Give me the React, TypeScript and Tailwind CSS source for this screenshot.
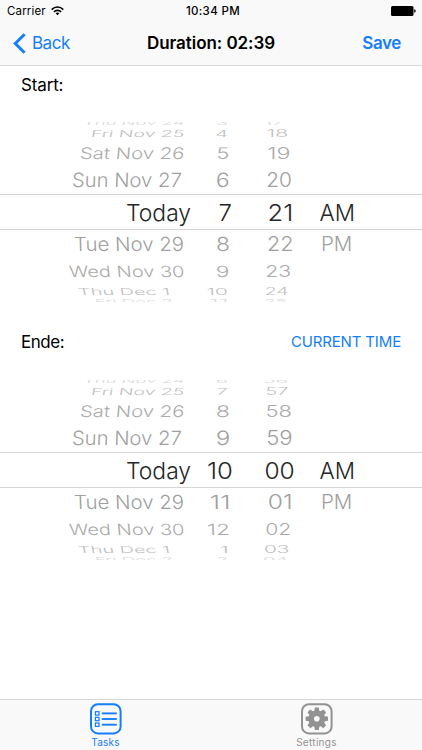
import React from 'react';

type Item = {
  text: string;
  // left and right edge of the drawn text
  left: number;
  right: number;
};

type WheelRow = {
  date: Item;
  hour: Item;
  minute: Item;
  period?: Item;
};

const item = (text: string, left: number, right: number): Item => ({ text, left, right });

const FONT = 'Inter, "Liberation Sans", sans-serif';

// Height, color and flattening of each row, from the top of the wheel to the bottom
const rowStyles = [
  { className: 'h-[4px] text-[#dadada]', size: 20, scaleY: 0.34, skew: -6, shift: -1.8 },
  { className: 'h-[14px] text-[#c0c0c0]', size: 20, scaleY: 0.48, skew: -5, shift: 0.3 },
  { className: 'h-[26px] text-[#ababab]', size: 20, scaleY: 0.8, skew: -4, shift: 0.3 },
  { className: 'h-[28px] text-[#a0a0a0]', size: 20, scaleY: 0.98, skew: -2, shift: 0.6 },
  { className: 'h-[36px] border-y border-[#d6d6d6] text-[#262626]', size: 23, scaleY: 1.02, skew: 0, shift: 0.5 },
  { className: 'h-[28px] text-[#a0a0a0]', size: 20, scaleY: 0.97, skew: 2, shift: 0.3 },
  { className: 'h-[26px] text-[#ababab]', size: 20, scaleY: 0.77, skew: 4, shift: 0.6 },
  { className: 'h-[14px] text-[#c0c0c0]', size: 20, scaleY: 0.48, skew: 5, shift: 0.4 },
  { className: 'h-[4px] text-[#dadada]', size: 20, scaleY: 0.34, skew: 6, shift: 2 },
];

const dates = [
  item('Thu Nov 24', 84, 184),
  item('Fri Nov 25', 92, 183.5),
  item('Sat Nov 26', 81, 183.5),
  item('Sun Nov 27', 73, 181.5),
  item('Today', 127, 190.3),
  item('Tue Nov 29', 75, 183),
  item('Wed Nov 30', 69, 184),
  item('Thu Dec 1', 79, 168),
  item('Fri Dec 2', 96, 172),
];

const startHours = [
  item('3', 217, 227),
  item('4', 216.5, 227.5),
  item('5', 217.5, 228.5),
  item('6', 217, 228.5),
  item('7', 219.5, 231),
  item('8', 217, 228.5),
  item('9', 217, 228.3),
  item('10', 207.5, 227.5),
  item('11', 210, 226.5),
];

const startMinutes = [
  item('17', 265, 283),
  item('18', 267.5, 287),
  item('19', 268.5, 289.3),
  item('20', 267.3, 291.5),
  item('21', 268.7, 291),
  item('22', 268, 292),
  item('23', 266.3, 290),
  item('24', 265.7, 288),
  item('25', 265, 286),
];

const endHours = [
  item('6', 217, 227),
  item('7', 217.5, 227),
  item('8', 217, 228.5),
  item('9', 217, 229),
  item('10', 208, 231.5),
  item('11', 211, 228),
  item('12', 208.3, 228.3),
  item('1', 221, 226.7),
  item('2', 218, 227),
];

const endMinutes = [
  item('56', 264, 287),
  item('57', 266.5, 288),
  item('58', 266.5, 290.5),
  item('59', 267.3, 291.5),
  item('00', 265.5, 293.5),
  item('01', 269, 290.3),
  item('02', 266.3, 290),
  item('03', 265, 288.3),
  item('04', 264, 287),
];

const buildRows = (hours: Item[], minutes: Item[]): WheelRow[] =>
  dates.map((date, index) => ({
    date,
    hour: hours[index],
    minute: minutes[index],
    period: index === 4 ? item('AM', 319.5, 353.3) : index === 5 ? item('PM', 322, 351.3) : undefined,
  }));

const context = document.createElement('canvas').getContext('2d')!;

interface CellProps {
  value?: Item;
  start: number;
  lean?: number;
  row: (typeof rowStyles)[number];
}

const Cell: React.FC<CellProps> = ({ value, start, lean = 0, row }) => {
  if (!value) {
    return <div />;
  }
  context.font = `350 ${row.size}px ${FONT}`;
  const box = context.measureText(value.text);
  const scaleX = (value.right - value.left) / (box.actualBoundingBoxRight + box.actualBoundingBoxLeft);
  const x = value.left - start + box.actualBoundingBoxLeft * scaleX;

  return (
    <div className="flex h-full items-center">
      <span
        className="origin-left whitespace-nowrap leading-none"
        style={{
          fontSize: row.size,
          transform: `translate(${x}px, ${row.shift}px) scale(${scaleX}, ${row.scaleY}) skewX(${row.skew * lean}deg)`,
        }}
      >
        {value.text}
      </span>
    </div>
  );
};

const Wheel: React.FC<{ rows: WheelRow[] }> = ({ rows }) => (
  <div className="flex flex-col overflow-hidden font-[350]">
    {rows.map((row, index) => (
      <div
        key={index}
        className={`grid shrink-0 grid-cols-[200px_56px_56px_110px] grid-rows-[100%] ${rowStyles[index].className}`}
      >
        <Cell value={row.date} start={0} lean={1} row={rowStyles[index]} />
        <Cell value={row.hour} start={200} lean={0.3} row={rowStyles[index]} />
        <Cell value={row.minute} start={256} row={rowStyles[index]} />
        <Cell value={row.period} start={312} row={rowStyles[index]} />
      </div>
    ))}
  </div>
);

const StatusBar = () => (
  <div className="grid h-[21px] grid-cols-3 items-center pl-[7px] pr-[6px] pt-px text-[11.5px] leading-none">
    <div className="flex items-center gap-[5px]">
      <span className="pt-px tracking-[0.15px]">Carrier</span>
      <svg width="13" height="10" viewBox="0 0 13 10" fill="none" stroke="#000" strokeWidth="1.6">
        <path d="M0.7 3.6C4 0.2 9 0.2 12.3 3.6" />
        <path d="M2.9 5.9C4.9 3.8 8.1 3.8 10.1 5.9" />
        <path d="M6.5 9.3L4.6 7.3C5.7 6.3 7.3 6.3 8.4 7.3Z" fill="#000" stroke="none" />
      </svg>
    </div>
    <span className="pl-[3px] pt-px text-center font-medium tracking-[0.35px]">10:34 PM</span>
    <svg className="justify-self-end" width="25" height="10" viewBox="0 0 25 10">
      <rect x="0" y="0" width="22.5" height="10" rx="1.5" />
      <path d="M23.2 3.3C25.2 3.6 25.2 6.4 23.2 6.7Z" />
    </svg>
  </div>
);

const NavBar = () => (
  <header className="grid h-[45px] grid-cols-[110px_1fr_110px] items-center border-b border-[#d6d6d6] text-[17px]">
    <button className="flex items-center gap-[6px] pl-[13px] text-[#157efb]">
      <svg width="13" height="21" viewBox="0 0 13 21" fill="none" stroke="currentColor" strokeWidth="3">
        <path d="M11.6 1.2L2.3 10.5L11.6 19.8" />
      </svg>
      <span className="pt-px tracking-[-0.5px]">Back</span>
    </button>
    <h1 className="pt-0.5 text-center font-semibold tracking-[-0.05px]">Duration: 02:39</h1>
    <button className="pr-[21px] pt-0.5 text-right font-semibold tracking-[-0.4px] text-[#157efb]">Save</button>
  </header>
);

const TasksIcon = () => (
  <svg width="32" height="32" viewBox="0 0 32 32" fill="none" stroke="currentColor">
    <rect x="1" y="1.2" width="29.6" height="29.2" rx="7" strokeWidth="2" />
    {[8.7, 14.3, 20].map((y) => (
      <React.Fragment key={y}>
        <rect x="5.4" y={y} width="3.6" height="3.4" strokeWidth="1.2" />
        <path d={`M11.8 ${y + 1.7}H26.8`} strokeWidth="1.9" />
      </React.Fragment>
    ))}
  </svg>
);

const SettingsIcon = () => (
  <svg width="32" height="32" viewBox="0 0 32 32" fill="none">
    <rect x="1" y="1.2" width="29.6" height="29.2" rx="7" stroke="currentColor" strokeWidth="2" />
    <g fill="currentColor">
      {[0, 45, 90, 135, 180, 225, 270, 315].map((angle) => (
        <path key={angle} d="M13.1 9L13.8 4.6H17.8L18.5 9Z" transform={`rotate(${angle} 15.8 15.8)`} />
      ))}
      <circle cx="15.8" cy="15.8" r="8.4" />
    </g>
    <circle cx="15.8" cy="15.8" r="2.8" fill="#f9f9f9" />
  </svg>
);

const TabBar = () => (
  <footer className="grid h-[51px] grid-cols-2 border-t border-[#d6d6d6] bg-[#f9f9f9] text-[10px] leading-none">
    <button className="flex flex-col items-center pt-[3px] text-[#157efb]">
      <TasksIcon />
      <span className="mt-[2px] tracking-[0.2px]">Tasks</span>
    </button>
    <button className="flex flex-col items-center pt-[3px] text-[#929292]">
      <SettingsIcon />
      <span className="mt-[2px] tracking-[0.3px]">Settings</span>
    </button>
  </footer>
);

const App: React.FC = () => {
  return (
    <div className="flex h-[750px] w-[422px] flex-col overflow-hidden bg-white font-[Inter,'Liberation_Sans',sans-serif] text-black">
      <div className="bg-[#f9f9f9]">
        <StatusBar />
        <NavBar />
      </div>
      <main className="flex grow flex-col">
        <div className="flex h-[56px] items-start px-[21px] pt-[7px] text-[17px] leading-6 tracking-[-0.15px]">Start:</div>
        <Wheel rows={buildRows(startHours, startMinutes)} />
        <div className="flex h-[78px] items-center justify-between px-[21px] pt-px text-[17px] leading-6 tracking-[-0.45px]">
          <span>Ende:</span>
          <button className="text-[15px] tracking-[-0.15px] text-[#157efb]">CURRENT TIME</button>
        </div>
        <Wheel rows={buildRows(endHours, endMinutes)} />
      </main>
      <TabBar />
    </div>
  );
};

export default App;
